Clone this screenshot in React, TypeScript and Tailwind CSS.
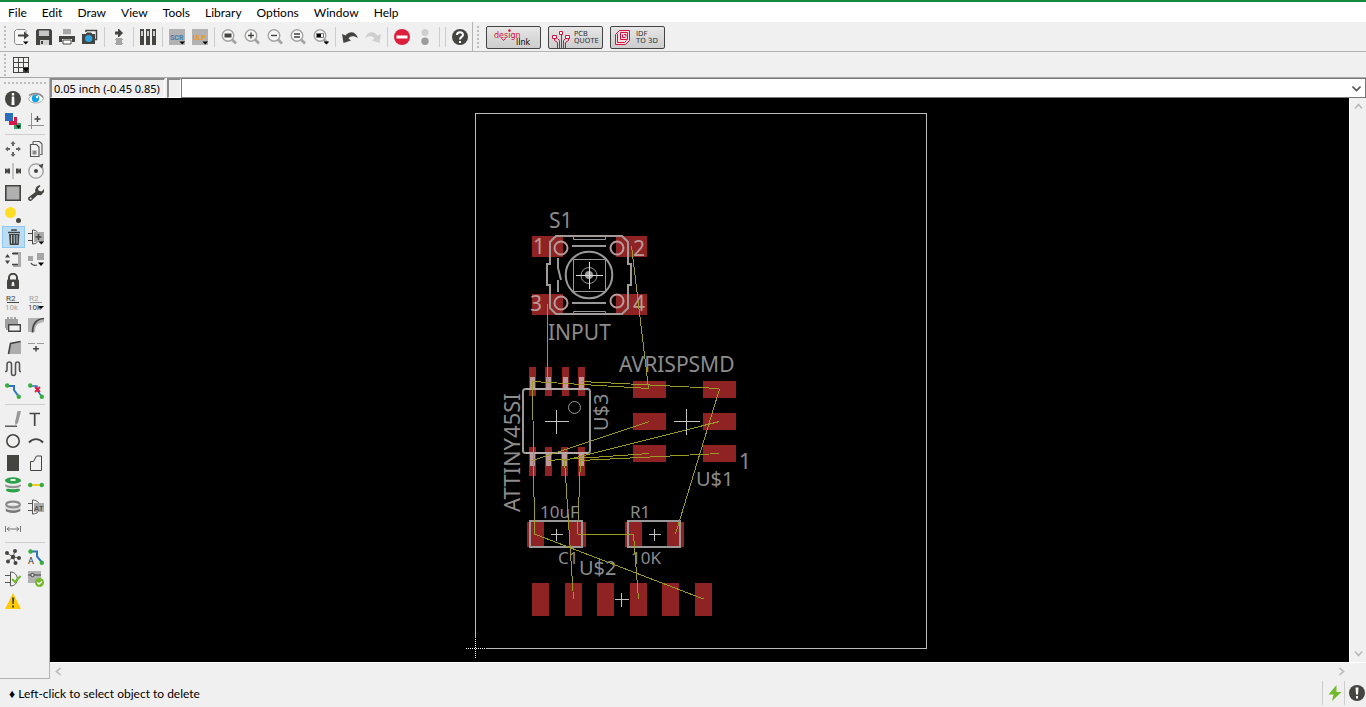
import { ReactNode, useState } from "react";

type Tool = {
  name: string;
  icon?: ReactNode;
};

const DARK = "#444441";

const menus = [
  "File",
  "Edit",
  "Draw",
  "View",
  "Tools",
  "Library",
  "Options",
  "Window",
  "Help",
];

const Icon = ({ children }: { children: ReactNode }) => (
  <svg width="16" height="16" viewBox="0 0 16 16" fill="none" aria-hidden="true">
    {children}
  </svg>
);

const Arrow = () => <path d="M10.5 12.5h5.5l-2.7 3z" fill="#000" />;

const Magnifier = ({ children }: { children: ReactNode }) => (
  <Icon>
    <circle cx="7" cy="6.5" r="5.8" fill="#f7f7f7" stroke="#a3a3a3" strokeWidth="1.4" />
    <path d="M11 10.5l4 4" stroke="#a3a3a3" strokeWidth="2.6" />
    {children}
  </Icon>
);

const fileTools: Tool[] = [
  {
    name: "Open",
    icon: (
      <Icon>
        <path d="M13 4V1.500L12 .5H3.500L1.500 2.500V13.500L3 15.500H10" stroke="#8b8b8b" fill="#f7f7f7" />
        <path d="M5 6.500h7" stroke={DARK} strokeWidth="2" />
        <path d="M11 2.500l5 4-5 4z" fill={DARK} />
        <path d="M10 12.500h5.500l-2.700 3z" fill="#000" />
      </Icon>
    ),
  },
  {
    name: "Save",
    icon: (
      <Icon>
        <path d="M1.500 0h13L16 1.500V16H0V1.500z" fill={DARK} />
        <path d="M3 1.500h10V7H3z" fill="#c7c7c7" />
        <path d="M4 11h9v5H4z" fill="#d5d5d5" />
        <path d="M5 12h2v3H5z" fill={DARK} />
      </Icon>
    ),
  },
  {
    name: "Print",
    icon: (
      <Icon>
        <path d="M4 0h8v6H4z" fill="#a6a6a6" />
        <path d="M0 7h16v6h-3v-3H3v3H0z" fill={DARK} />
        <path d="M4 11h8v4H4z" fill="#fff" stroke={DARK} />
        <path d="M4 5.500h8" stroke="#ddd" />
      </Icon>
    ),
  },
  {
    name: "CAM processor",
    icon: (
      <Icon>
        <path d="M4 3V1.500h10.500v9H13" stroke={DARK} strokeWidth="1.500" />
        <path d="M0 5h3.500l1.500-1.500h4L10.500 5H13v10H0z" fill={DARK} />
        <circle cx="6.700" cy="9.500" r="3.600" fill="#2da3e0" />
      </Icon>
    ),
  },
];

const schematicTools: Tool[] = [
  {
    name: "Schematic",
    icon: (
      <Icon>
        <path d="M4 2.500h3V0h1l4 4-4 4H7V5.500H4z" fill={DARK} />
        <path d="M5 9h6v7H5z" fill="#a6a6a6" />
        <path d="M4 10.500h8M4 14.500h8" stroke="#a6a6a6" />
      </Icon>
    ),
  },
];

const libraryTools: Tool[] = [
  {
    name: "Library manager",
    icon: (
      <Icon>
        <path
          d="M0 0h4v16H0zM6 0h4v16H6zM12 0h4v16h-4z"
          fill={DARK}
        />
        <path d="M1.200 2h1.600v5H1.200zM7.200 2h1.600v5H7.200zM13.200 2h1.600v5h-1.600z" fill="#eee" />
      </Icon>
    ),
  },
];

const scriptTools: Tool[] = [
  {
    name: "Script",
    icon: (
      <Icon>
        <path d="M0 0h16v16H0z" fill="#b2b2b2" />
        <text x="1" y="11" fontSize="7" fontWeight="700" fill="#3d7cb5" fontFamily="Roboto, sans-serif">SCR</text>
        <Arrow />
      </Icon>
    ),
  },
  {
    name: "User language program",
    icon: (
      <Icon>
        <path d="M0 0h16v16H0z" fill="#b2b2b2" />
        <text x="1" y="11" fontSize="7" fontWeight="700" fill="#e39a2d" fontFamily="Roboto, sans-serif">ULP</text>
        <Arrow />
      </Icon>
    ),
  },
];

const zoomTools: Tool[] = [
  {
    name: "Zoom to fit",
    icon: (
      <Magnifier>
        <path d="M3.500 4.500h7v4h-7z" fill={DARK} />
      </Magnifier>
    ),
  },
  {
    name: "Zoom in",
    icon: (
      <Magnifier>
        <path d="M7 3.500v6M4 6.500h6" stroke={DARK} strokeWidth="1.400" />
      </Magnifier>
    ),
  },
  {
    name: "Zoom out",
    icon: (
      <Magnifier>
        <path d="M4 6.500h6" stroke={DARK} strokeWidth="1.400" />
      </Magnifier>
    ),
  },
  {
    name: "Redraw",
    icon: (
      <Magnifier>
        <path d="M4 5h6M4 8h6" stroke={DARK} strokeWidth="1.300" />
      </Magnifier>
    ),
  },
  {
    name: "Zoom select",
    icon: (
      <Magnifier>
        <path d="M3.500 4.500h7v4h-7z" stroke="#777" />
        <path d="M4 5h4v3H4z" fill="#000" />
        <Arrow />
      </Magnifier>
    ),
  },
];

const historyTools: Tool[] = [
  {
    name: "Undo",
    icon: (
      <Icon>
        <path d="M0 5l1.500 9L9 11.500 6.500 9.500c2-3 5.500-3 9.500-.5C13.500 2.500 8 1.500 3.500 6.500z" fill={DARK} />
      </Icon>
    ),
  },
  {
    name: "Redo",
    icon: (
      <Icon>
        <path d="M16 5l-1.500 9L7 11.500l2.500-2C7.500 6.500 4 6.500 0 9 2.500 2.500 8 1.500 12.500 6.500z" fill="#cfcfcf" />
      </Icon>
    ),
  },
];

const stopTools: Tool[] = [
  {
    name: "Stop command",
    icon: (
      <Icon>
        <circle cx="8" cy="8" r="8" fill="#dc1f3c" />
        <path d="M2.500 6.500h11v3h-11z" fill="#fff" />
      </Icon>
    ),
  },
  {
    name: "Execute command",
    icon: (
      <Icon>
        <circle cx="8" cy="3.500" r="3.500" fill="#cfcfcf" />
        <circle cx="8" cy="12.300" r="3.700" fill="#9b9b9b" />
      </Icon>
    ),
  },
];

const helpTools: Tool[] = [
  {
    name: "Help topics",
    icon: (
      <Icon>
        <circle cx="8" cy="8" r="8" fill={DARK} />
        <path d="M5 6c0-3.600 6-3.600 6-.3C11 8 8 7.800 8 10.500" stroke="#fff" strokeWidth="2" />
        <path d="M7 12h2v2H7z" fill="#fff" />
      </Icon>
    ),
  },
];

const gridIcon = (
  <Icon>
    <path d="M0 0h16v16H0z" fill={DARK} />
    <path
      d="M1 1h4v4H1zM6 1h4v4H6zM11 1h4v4h-4zM1 6h4v4H1zM6 6h4v4H6zM11 6h4v4h-4zM1 11h4v4H1zM6 11h4v4H6z"
      fill="#f0f0f0"
    />
    <path d="M10 11h6l-3 4z" fill="#000" />
  </Icon>
);

const commandGroups: Tool[][] = [
  [
    {
      name: "Info",
      icon: (
        <Icon>
          <circle cx="8" cy="8" r="8" fill={DARK} />
          <path d="M6.800 2h2.400v2.500H6.800zM6.800 5.500h2.400L9.500 14h-3z" fill="#fff" />
        </Icon>
      ),
    },
    {
      name: "Show",
      icon: (
        <Icon>
          <path d="M.5 8C3 2.500 12 1.500 15.500 7c-1 6-12.500 7-15 1z" fill="#fff" stroke="#aaa" />
          <path d="M1 4.500C5 1.500 12 1.500 15 6.500" stroke="#888" strokeWidth="1.400" />
          <circle cx="7.500" cy="7.500" r="3.700" fill="#12a0e6" />
          <circle cx="9" cy="6" r="1.200" fill="#fff" />
        </Icon>
      ),
    },
    {
      name: "Display",
      icon: (
        <Icon>
          <path d="M9 10h7v6H9z" fill="#35a866" />
          <path d="M9 4h3v8H4V8h5z" fill="#d8184b" />
          <path d="M0 0h8v8H0z" fill="#2a6fbb" />
          <path d="M11 12.500h5l-2.500 3z" fill="#000" />
        </Icon>
      ),
    },
    {
      name: "Mark",
      icon: (
        <Icon>
          <path d="M3.500 0v16M0 12.500h16" stroke="#8f8f8f" />
          <path d="M9.500 3v6M6.500 6h6" stroke={DARK} strokeWidth="1.400" />
        </Icon>
      ),
    },
  ],
  [
    {
      name: "Move",
      icon: (
        <Icon>
          <path
            d="M8 0l2.500 3H9v2H7V3H5.500zM8 16l2.500-3H9v-2H7v2H5.500zM0 8l3-2.500V7h2v2H3v1.500zM16 8l-3-2.500V7h-2v2h2v1.500z"
            fill="#666663"
          />
        </Icon>
      ),
    },
    {
      name: "Copy",
      icon: (
        <Icon>
          <path d="M5 3V1l.5-.5h6l2.500 2.500V13.500H12" stroke="#666" strokeWidth="1.200" />
          <path d="M2.500 3.500h6l2.500 2.500v9.500H2.500z" fill="#f4f4f4" stroke="#555" strokeWidth="1.200" />
          <path d="M4.500 9.500h4v4h-4z" fill="#888" />
        </Icon>
      ),
    },
    {
      name: "Mirror",
      icon: (
        <Icon>
          <path d="M8 0v16" stroke="#999" />
          <path d="M0 5.500h1.500v1h1v-1H5v5H2.500v-1h-1v1H0zM16 5.500h-1.500v1h-1v-1H11v5h2.500v-1h1v1H16z" fill={DARK} />
        </Icon>
      ),
    },
    {
      name: "Rotate",
      icon: (
        <Icon>
          <circle cx="8" cy="8" r="7.200" stroke="#999" strokeWidth="1.300" />
          <circle cx="8" cy="8" r="2" fill={DARK} />
          <path d="M10.500 2.500L15.500.5 14 5.500z" fill={DARK} />
        </Icon>
      ),
    },
    {
      name: "Group",
      icon: (
        <Icon>
          <path d="M.8.800h14.400v14.400H.8z" fill="#b0b0b0" stroke={DARK} strokeWidth="1.600" />
        </Icon>
      ),
    },
    {
      name: "Change",
      icon: (
        <Icon>
          <path
            d="M11.500 0L8.500 1.800 7 5l.5 2L.3 12.500c-1 2 1 4.200 3 3.300L9.500 10l3.500.2L16 7V4l-2.500 2.500-3-1L10 3.500 12.500 1z"
            fill={DARK}
          />
          <circle cx="2.700" cy="13.500" r="1" fill="#eee" />
        </Icon>
      ),
    },
    {
      name: "Cut",
      icon: (
        <Icon>
          <circle cx="5.500" cy="5.500" r="5.500" fill="#ffdf26" />
          <circle cx="13.500" cy="13.500" r="2.500" fill={DARK} />
        </Icon>
      ),
    },
    { name: "" },
    {
      name: "Delete",
      icon: (
        <Icon>
          <path d="M7 2V1h4v1M3 3.500h12" stroke={DARK} strokeWidth="1.500" />
          <path d="M4 5h10.500l-.8 11H4.800z" fill={DARK} />
          <path d="M6.500 6v8.500M9.250 6v8.500M12 6v8.500" stroke="#b0c9dc" />
        </Icon>
      ),
    },
    {
      name: "Add",
      icon: (
        <Icon>
          <path d="M0 4.500h4M0 11.500h4M4.500 1v14c9 0 9-14 0-14z" stroke={DARK} />
          <path d="M6 3h10v10H6z" fill="#aaa" />
          <path d="M10.500 5v6M7.500 8h6" stroke={DARK} strokeWidth="1.500" />
          <Arrow />
        </Icon>
      ),
    },
    {
      name: "Pin swap",
      icon: (
        <Icon>
          <path d="M8 1h8v15H8v-3h5V4H8z" fill="#aaa" />
          <path d="M7 2.500h6M7 13.500h6" stroke={DARK} strokeWidth="1.300" />
          <path d="M0 6.500h5L2.500 3zM0 9.500h5L2.500 13z" fill={DARK} />
        </Icon>
      ),
    },
    {
      name: "Replace",
      icon: (
        <Icon>
          <path d="M0 5h5v5H0zM9 2h7v7H9z" fill="#a5a5a5" />
          <path d="M3 12c1 2 3 3 6 2" stroke={DARK} strokeWidth="1.300" />
          <path d="M10 11.500h6l-3 3.500z" fill="#000" />
        </Icon>
      ),
    },
    {
      name: "Lock",
      icon: (
        <Icon>
          <path d="M4 7V4.500a4 3.700 0 018 0V7" stroke={DARK} strokeWidth="2" />
          <rect x="2" y="6.500" width="12" height="9.500" rx="1" fill={DARK} />
          <path d="M7 9h2l.5 4h-3z" fill="#eee" />
        </Icon>
      ),
    },
    { name: "" },
    {
      name: "Name",
      icon: (
        <Icon>
          <text x="1" y="6" fontSize="8" fill={DARK} fontFamily="Roboto, sans-serif">R2</text>
          <path d="M2 7.500h12" stroke={DARK} />
          <text x="0" y="15" fontSize="8" fill="#a0a0a0" fontFamily="Roboto, sans-serif">10k</text>
        </Icon>
      ),
    },
    {
      name: "Value",
      icon: (
        <Icon>
          <text x="1" y="6" fontSize="8" fill="#a0a0a0" fontFamily="Roboto, sans-serif">R2</text>
          <path d="M2 7.500h12" stroke="#999" />
          <text x="0" y="15" fontSize="8" fill={DARK} fontFamily="Roboto, sans-serif">10k</text>
          <path d="M10 11h6l-3 3z" fill="#000" />
        </Icon>
      ),
    },
    {
      name: "Smash",
      icon: (
        <Icon>
          <path d="M0 2h13v9H0zM2 0h2v2H2zM5.500 0h2v2h-2zM9 0h2v2H9zM1 11h2v2H1z" fill="#a0a0a0" />
          <path d="M3.700 7.700h11.600v6.600H3.700z" fill="#f0f0f0" stroke={DARK} strokeWidth="1.400" />
        </Icon>
      ),
    },
    {
      name: "Miter",
      icon: (
        <Icon>
          <path d="M0 1h16v4C9 6 7 9 7 15H0z" fill="#b3b3b3" />
          <path d="M4.500 15.500C4.500 6.500 8 2 16 1.500" stroke={DARK} strokeWidth="1.700" />
        </Icon>
      ),
    },
    {
      name: "Split",
      icon: (
        <Icon>
          <path d="M3.500 14L6 4l10-2v13H3.500z" fill="#adadad" />
          <path d="M3.500 15L5.500 4.500l10-2" stroke={DARK} strokeWidth="1.600" />
        </Icon>
      ),
    },
    {
      name: "Optimize",
      icon: (
        <Icon>
          <path d="M0 4.500h7M9 4.500h7" stroke="#999" />
          <path d="M8 7v5.500M5 9.700h6" stroke={DARK} strokeWidth="1.500" />
        </Icon>
      ),
    },
    {
      name: "Meander",
      icon: (
        <Icon>
          <path
            d="M0 10.500h.5a1.500 1.500 0 001.500-1.500V3.250a2.250 2.250 0 014.500 0v9a2 2.250 0 004 0v-9a2 2.250 0 014 0v6a1.500 1.500 0 001.500 1.500"
            stroke="#555"
            strokeWidth="1.600"
          />
        </Icon>
      ),
    },
    { name: "" },
    {
      name: "Route",
      icon: (
        <Icon>
          <path d="M2 3h7v4l5 7" stroke="#2d74c4" strokeWidth="2" />
          <circle cx="2.200" cy="2.500" r="2.200" fill="#39ac3f" />
          <circle cx="13.800" cy="13.800" r="2.200" fill="#39ac3f" />
        </Icon>
      ),
    },
    {
      name: "Ripup",
      icon: (
        <Icon>
          <path d="M2 3h7v4l5 7" stroke="#2d74c4" strokeWidth="1.500" />
          <path d="M7 4l5 5M12 4L7 9" stroke="#e01d3f" strokeWidth="1.800" />
          <circle cx="2.200" cy="2.500" r="2.200" fill="#39ac3f" />
          <circle cx="13.800" cy="13.800" r="2.200" fill="#39ac3f" />
        </Icon>
      ),
    },
  ],
  [
    {
      name: "Line",
      icon: (
        <Icon>
          <path d="M12.500 0H16l-3 12-2.500 2-.5-3z" fill="#999" />
          <path d="M0 15.200h12" stroke={DARK} strokeWidth="1.300" />
        </Icon>
      ),
    },
    {
      name: "Text",
      icon: (
        <Icon>
          <path d="M1.500 2.500h10.500M6.700 2.500V15" stroke={DARK} strokeWidth="1.700" />
        </Icon>
      ),
    },
    {
      name: "Circle",
      icon: (
        <Icon>
          <circle cx="8" cy="8" r="6.200" stroke={DARK} strokeWidth="1.600" />
        </Icon>
      ),
    },
    {
      name: "Arc",
      icon: (
        <Icon>
          <path d="M1 9.500c4-4.500 10-4.500 14 0" stroke={DARK} strokeWidth="1.900" />
        </Icon>
      ),
    },
    {
      name: "Rectangle",
      icon: (
        <Icon>
          <path d="M2 0h12v16H2z" fill={DARK} />
        </Icon>
      ),
    },
    {
      name: "Polygon",
      icon: (
        <Icon>
          <path d="M2.500 15.500v-9h3l3-5.500h5v14.500z" stroke={DARK} />
        </Icon>
      ),
    },
    {
      name: "Via",
      icon: (
        <Icon>
          <ellipse cx="8" cy="13" rx="7" ry="2.500" fill="#2aa146" />
          <ellipse cx="8" cy="9.500" rx="8" ry="2.800" fill="#eee" />
          <ellipse cx="8" cy="8.500" rx="8" ry="2.700" fill="#929292" />
          <ellipse cx="8" cy="6.500" rx="8" ry="2.500" fill="#eee" />
          <ellipse cx="8" cy="3.500" rx="8" ry="3.200" fill="#2aa146" />
          <ellipse cx="8" cy="3" rx="3" ry="1" fill="#fff" />
        </Icon>
      ),
    },
    {
      name: "Signal",
      icon: (
        <Icon>
          <path d="M2 8h12" stroke="#f7ca1b" strokeWidth="2" />
          <circle cx="2.200" cy="8" r="2.200" fill="#39ac3f" />
          <circle cx="13.800" cy="8" r="2.200" fill="#39ac3f" />
        </Icon>
      ),
    },
    {
      name: "Hole",
      icon: (
        <Icon>
          <ellipse cx="8" cy="11" rx="7.500" ry="3" fill="#777" />
          <ellipse cx="8" cy="8.500" rx="8" ry="3" fill="#ddd" />
          <ellipse cx="8" cy="5.500" rx="6.800" ry="2.800" stroke="#8b8b8b" strokeWidth="2.200" />
        </Icon>
      ),
    },
    {
      name: "Attribute",
      icon: (
        <Icon>
          <path d="M0 4.500h4M0 11.500h4M4.500 1v14c10 0 10-14 0-14z" stroke="#555" />
          <path d="M6 4h10v9H6z" fill="#aaa" />
          <text x="6" y="12" fontSize="8" fill="#333" fontFamily="Roboto, sans-serif">AT</text>
        </Icon>
      ),
    },
    {
      name: "Dimension",
      icon: (
        <Icon>
          <path d="M.5 5v6M15.500 5v6M2 8h12M4.500 6L2 8l2.500 2M11.500 6L14 8l-2.500 2" stroke="#777" />
        </Icon>
      ),
    },
    { name: "" },
  ],
  [
    {
      name: "Ratsnest",
      icon: (
        <Icon>
          <path d="M8 8L2 4M8 8l2-6M8 8l6.500 1M8 8l-5 4M8 8l2.500 6" stroke="#666" />
          <g fill={DARK}>
            <circle cx="8" cy="8" r="2.200" />
            <circle cx="2" cy="4" r="2" />
            <circle cx="10" cy="2" r="2" />
            <circle cx="14" cy="9" r="2" />
            <circle cx="3" cy="12.500" r="2" />
            <circle cx="10.500" cy="14" r="2" />
          </g>
        </Icon>
      ),
    },
    {
      name: "Autorouter",
      icon: (
        <Icon>
          <path d="M2 2.500h7v5l5 6" stroke="#2d74c4" strokeWidth="2" />
          <circle cx="2.500" cy="2.500" r="2.200" fill="#39ac3f" />
          <circle cx="13.800" cy="13.800" r="2.200" fill="#39ac3f" />
          <text x="0" y="15" fontSize="9" fill="#333" fontFamily="Roboto, sans-serif">A</text>
        </Icon>
      ),
    },
    {
      name: "Electrical rule check",
      icon: (
        <Icon>
          <path d="M0 4.500h5M0 11.500h5M5.500 1v14c9 0 9-14 0-14z" stroke="#555" />
          <path d="M7 8l3 3 5.500-6" stroke="#72b92b" strokeWidth="2" />
        </Icon>
      ),
    },
    {
      name: "Design rule check",
      icon: (
        <Icon>
          <path d="M0 0h13v12H0z" fill="#b0b0b0" />
          <path d="M0 4h13" stroke={DARK} />
          <circle cx="4.500" cy="4" r="1.700" fill="#ddd" stroke={DARK} />
          <circle cx="11.500" cy="11.500" r="4.500" fill="#72b92b" />
          <path d="M9.300 11.500l1.700 1.700 3-3" stroke="#fff" strokeWidth="1.300" />
        </Icon>
      ),
    },
    {
      name: "Errors",
      icon: (
        <Icon>
          <path d="M8 0l8 16H0z" fill="#ffcb05" />
          <path d="M7 4.500h2.200l-.4 6.500H7.400zM7 12.500h2v2H7z" fill={DARK} />
        </Icon>
      ),
    },
  ],
];

const ToolGroup = ({ tools }: { tools: Tool[] }) => (
  <div className="flex">
    {tools.map((tool) => (
      <button key={tool.name} aria-label={tool.name} className="h-4 w-[23px] pl-[3px]">
        {tool.icon}
      </button>
    ))}
  </div>
);

const Separator = () => (
  <div className="w-[6px] pl-[2px]">
    <div className="-mt-[2px] h-5 w-px bg-[#cdcdcd]" />
  </div>
);

const Handle = () => (
  <div className="-mt-[3px] ml-1 h-[22px] w-[2px] bg-[repeating-linear-gradient(to_bottom,#bdbdbd_0_2px,#f0f0f0_2px_4px)]" />
);

const CrossHair = ({ x, y, r }: { x: number; y: number; r: number }) => (
  <path d={`M${x - r} ${y}h${2 * r}M${x} ${y - r}v${2 * r}`} stroke="#c4c4c4" />
);

const pads = [
  // switch
  [532, 236, 31, 21],
  [616, 236, 31, 21],
  [532, 294, 31, 21],
  [616, 294, 31, 21],
  // attiny
  [529, 367, 7, 29],
  [545, 367, 7, 29],
  [562, 367, 7, 29],
  [578, 367, 7, 29],
  [529, 447, 7, 29],
  [545, 447, 7, 29],
  [561, 447, 7, 29],
  [578, 447, 7, 29],
  // isp header
  [633, 381, 33, 17],
  [703, 381, 33, 17],
  [633, 413, 33, 17],
  [703, 413, 33, 17],
  [633, 445, 33, 17],
  [703, 445, 33, 17],
  // capacitor and resistor
  [527, 522, 17, 25],
  [569, 522, 17, 25],
  [625, 522, 17, 25],
  [667, 522, 17, 25],
  // ftdi header
  [532, 583, 17, 33],
  [565, 583, 17, 33],
  [597, 583, 17, 33],
  [630, 583, 17, 33],
  [662, 583, 17, 33],
  [695, 583, 17, 33],
];

const pins = [
  [530, 377, 11],
  [546, 377, 11],
  [563, 377, 11],
  [579, 377, 11],
  [530, 454, 12],
  [546, 454, 12],
  [562, 454, 12],
  [579, 454, 12],
];

const airwires = [
  [631.5, 246, 648.5, 388],
  [547.5, 304, 547.5, 382],
  [532.5, 381.5, 649, 388.5],
  [581, 381.5, 719, 388.5],
  [532.5, 381, 534.5, 534],
  [532.5, 460.5, 649.5, 421.5],
  [548, 460.5, 649.5, 453.5],
  [564.5, 460.5, 719.5, 421.5],
  [580.5, 460.5, 719.5, 453.5],
  [719.5, 389, 675.5, 534],
  [564.5, 460, 573.5, 599],
  [580.5, 460, 577.5, 534],
  [577.5, 534.5, 633.5, 534.5],
  [633.5, 534, 638.5, 599],
  [534.5, 534, 703.5, 599],
];

const Board = () => (
  <svg
    viewBox="50 98 1299 564"
    className="absolute inset-0 h-full w-full"
    role="img"
    aria-label="Board layout"
    fill="none"
  >
    <g shapeRendering="crispEdges">
      <path d="M475.500 638V113.500H926.500V648.500H486" stroke="#bcbcbc" />
      <path d="M475.500 639v20M466 648.500h20" stroke="#fff" strokeDasharray="1 1" />
      {pads.map(([x, y, w, h]) => (
        <rect key={`${x}-${y}`} x={x} y={y} width={w} height={h} fill="#8f2323" />
      ))}
      {pins.map(([x, y, h]) => (
        <rect key={`${x}-${y}`} x={x} y={y} width="5" height={h} fill="#bd9999" />
      ))}
    </g>

    <g stroke="#999" strokeWidth="2">
      <path d="M556 236h66l6 6v22h3v21h-3v23l-6 6h-66l-6-6v-23h-3v-21h3v-22z" stroke="#a39a9a" />
      <circle cx="561" cy="248" r="6.500" stroke="#bb9999" />
      <circle cx="617" cy="248" r="6.500" stroke="#bb9999" />
      <circle cx="561" cy="303" r="6.500" stroke="#bb9999" />
      <circle cx="617" cy="301" r="6.500" stroke="#bb9999" />
      <circle cx="589" cy="275" r="23.300" />
      <path d="M572 246h34M572 303h34M558 258v10l3 12M558 280v12" />
    </g>
    <g stroke="#999">
      <path d="M573.500 236v3.500h32V236M573.500 314v-2.500h32v2.500M573.500 259.500h32v32h-32z" />
      <circle cx="589" cy="275.500" r="8" />
      <circle cx="574.500" cy="407.500" r="6" />
    </g>
    <circle cx="589" cy="275" r="4" fill="#a0a0a0" />
    <path d="M576 275.500h27M589.500 262v27" stroke="#d8d8d8" />

    <g stroke="#999" strokeWidth="2">
      <rect x="523" y="389" width="67" height="64" rx="2.500" />
      <rect x="530" y="521" width="52" height="26" />
      <rect x="628" y="521" width="52" height="26" />
    </g>
    <path d="M526 389h62M526 453h62" stroke="#b5aaaa" strokeWidth="2" />

    <g fill="#8c8c8c" fontFamily="'Noto Sans', sans-serif" fontSize="21">
      <text x="549" y="228">S1</text>
      <text x="548" y="340">INPUT</text>
      <text x="619" y="372">AVRISPSMD</text>
      <text x="739" y="469">1</text>
      <text x="696" y="486" fontSize="20">U$1</text>
      <text x="579" y="575" fontSize="20">U$2</text>
      <text transform="translate(608 431) rotate(-90)" fontSize="20">U$3</text>
      <text transform="translate(520 512) rotate(-90)" fontSize="22">ATTINY45SI</text>
      <g fill="#bb9999">
        <text x="533" y="254">1</text>
        <text x="633" y="256">2</text>
        <text x="530" y="311">3</text>
        <text x="633" y="311">4</text>
      </g>
      <g fontSize="17">
        <text x="540" y="518">10uF</text>
        <text x="630" y="518">R1</text>
        <text x="558" y="564">C1</text>
        <text x="631" y="564">10K</text>
      </g>
    </g>

    <g shapeRendering="crispEdges">
      {airwires.map(([x1, y1, x2, y2]) => (
        <line key={`${x1}-${y1}-${x2}`} x1={x1} y1={y1} x2={x2} y2={y2} stroke="#9a9a24" />
      ))}
      <CrossHair x={556.5} y={421.5} r={12} />
      <CrossHair x={686.5} y={421.5} r={13} />
      <CrossHair x={556.5} y={534.5} r={6} />
      <CrossHair x={654.5} y={534.5} r={6} />
      <CrossHair x={621.5} y={599.5} r={7} />
    </g>
  </svg>
);

const Chevron = ({ d, color = "#b9b9b9" }: { d: string; color?: string }) => (
  <svg width="9" height="9" viewBox="0 0 9 9" fill="none" aria-hidden="true">
    <path d={d} stroke={color} strokeWidth="1.600" />
  </svg>
);

const linkButton =
  "flex h-[23px] w-[55px] items-center overflow-hidden rounded-[2px] border border-[#444] bg-linear-to-b from-[#e6e6e6] to-[#cdcdcd]";

const App = () => {
  const [command, setCommand] = useState("");
  const [selected, setSelected] = useState("Delete");

  return (
    <div className="flex h-screen flex-col overflow-hidden bg-[#f0f0f0] font-[Lato,sans-serif] text-xs text-black">
      <nav className="flex h-[22px] shrink-0 items-center gap-[15px] border-t-2 border-[#138a40] bg-white px-2 pt-px">
        {menus.map((menu) => (
          <button key={menu} className="leading-5">
            {menu}
          </button>
        ))}
      </nav>

      <div className="flex h-[30px] shrink-0 items-start border-b border-[#b4b4b4] pt-[7px]">
        <Handle />
        <div className="flex pl-1">
          <ToolGroup tools={fileTools} />
          <Separator />
          <ToolGroup tools={schematicTools} />
          <Separator />
          <ToolGroup tools={libraryTools} />
          <Separator />
          <ToolGroup tools={scriptTools} />
          <Separator />
          <ToolGroup tools={zoomTools} />
          <Separator />
          <ToolGroup tools={historyTools} />
          <Separator />
          <ToolGroup tools={stopTools} />
          <Separator />
          <Separator />
          <ToolGroup tools={helpTools} />
        </div>
        <div className="-mt-[7px] h-[29px] w-px bg-[#b4b4b4]" />
        <Handle />
        <div className="-mt-[3px] flex gap-[7px] pl-[7px]">
          <button className={linkButton} aria-label="design link">
            <svg width="53" height="21" viewBox="0 0 53 21" aria-hidden="true" fontFamily="'DejaVu Sans', sans-serif">
              <text x="7" y="11" fontSize="8" fill="#d5103f">design</text>
              <text x="29" y="18" fontSize="8" fill="#000">link</text>
              <path d="M14.500 11.500l2 2 2-2M32.500 11v7" stroke="#d5103f" fill="none" />
              <circle cx="22.500" cy="3.500" r="1.200" fill="#d5103f" />
            </svg>
          </button>
          <button className={linkButton}>
            <svg width="22" height="21" viewBox="0 0 22 21" fill="none" aria-hidden="true">
              <path
                d="M5.500 11.500v2l3 2V21M8.500 11.500l2 2V21M12.500 8v13M16.500 11.500l-2 2V21M19.500 11.500v2l-3 2V21"
                stroke="#d5103f"
              />
              <path d="M3.500 8.500h4v3h-4zM10.500 4.500h3v3h-3zM16.500 8.500h4v3h-4z" fill="#fff" stroke="#d5103f" />
            </svg>
            <span className="ml-[3px] text-left font-['DejaVu_Sans',sans-serif] text-[7px] leading-[7px] text-[#333]">
              PCB
              <br />
              QUOTE
            </span>
          </button>
          <button className={linkButton}>
            <svg width="22" height="21" viewBox="0 0 22 21" fill="none" aria-hidden="true">
              <path d="M4.500 7.500l4-4h10v10l-4 4h-10z" fill="#f4dfe4" stroke="#d5103f" />
              <path d="M9.500 5.500h7v7h-7zM6.500 7v8.500h7l2-2" stroke="#d5103f" />
              <path d="M11.500 7.500v3h3M13 7.500h2v2" stroke="#d5103f" />
            </svg>
            <span className="ml-[3px] text-left font-['DejaVu_Sans',sans-serif] text-[7px] leading-[7px] text-[#333]">
              IDF
              <br />
              TO 3D
            </span>
          </button>
        </div>
      </div>

      <div className="flex h-[26px] shrink-0 items-start border-b border-[#a8a8a8] pt-[5px]">
        <Handle />
        <button aria-label="Grid" className="ml-1 h-4 w-[23px] pl-[3px]">
          {gridIcon}
        </button>
      </div>

      <div className="flex min-h-0 flex-1">
        <aside className="w-[50px] shrink-0 border-r border-b border-[#b4b4b4] pt-1 pl-[2px]">
          <div className="mb-1 ml-[2px] h-[2px] w-[43px] bg-[repeating-linear-gradient(to_right,#bdbdbd_0_2px,#f0f0f0_2px_4px)]" />
          {commandGroups.map((group, i) => (
            <div key={i}>
              {i > 0 && (
                <div className="ml-[3px] h-[6px] w-10 pt-[2px]">
                  <div className="h-px bg-[#cdcdcd]" />
                </div>
              )}
              <div className="grid grid-cols-[23px_23px] auto-rows-[22px]">
                {group.map((tool, j) =>
                  tool.icon ? (
                    <button
                      key={tool.name}
                      aria-label={tool.name}
                      onClick={() => setSelected(tool.name)}
                      className={
                        selected === tool.name
                          ? "border border-[#8fc8f5] bg-[#bcdcf4] pl-[2px]"
                          : "border-y border-transparent pl-[3px]"
                      }
                    >
                      {tool.icon}
                    </button>
                  ) : (
                    <span key={j} />
                  ),
                )}
              </div>
            </div>
          ))}
        </aside>

        <main className="flex min-w-0 flex-1 flex-col">
          <div className="flex h-5 shrink-0">
            <div className="mr-[2px] min-w-[115px] border-t-2 border-r border-b border-l-2 border-[#8a8a8a] border-r-white border-b-white px-[2px] font-['Noto_Sans',sans-serif] text-[11px] leading-[17px] whitespace-nowrap">
              0.05 inch (-0.45 0.85)
            </div>
            <div className="w-[14px] border-t-2 border-r border-b border-l-2 border-[#8a8a8a] border-r-white border-b-white" />
            <div className="flex flex-1 items-center border border-[#7a7a7a] bg-white">
              <input
                aria-label="Command line"
                value={command}
                onChange={(e) => setCommand(e.target.value)}
                className="h-full min-w-0 flex-1 px-1 outline-none"
              />
              <button aria-label="Command history" className="w-[13px]">
                <Chevron d="M.5 2.500l4 4 4-4" color="#555" />
              </button>
            </div>
          </div>
          <div className="flex min-h-0 flex-1">
            <div className="relative flex-1 bg-black">
              <Board />
            </div>
            <div className="flex w-[17px] flex-col items-center justify-between border-l border-white py-1">
              <button aria-label="Scroll up">
                <Chevron d="M1 6.500l3.500-4 3.500 4" />
              </button>
              <button aria-label="Scroll down">
                <Chevron d="M1 2.500l3.500 4 3.500-4" />
              </button>
            </div>
          </div>
          <div className="flex h-[17px] shrink-0 items-center justify-between border-t border-white pr-5 pl-1">
            <button aria-label="Scroll left">
              <Chevron d="M6.500 1l-4 3.500 4 3.500" />
            </button>
            <button aria-label="Scroll right">
              <Chevron d="M2.500 1l4 3.500-4 3.500" />
            </button>
          </div>
        </main>
      </div>

      <footer className="flex h-7 shrink-0 items-center pl-[9px]">
        <span className="pt-px">♦ Left-click to select object to delete</span>
        <div className="ml-auto flex items-center">
          <div className="flex h-6 w-[22px] items-center border-l border-[#cdcdcd] pl-1">
            <Icon>
              <path d="M9.500 0L1.500 9.500h5L5 16l9.500-9h-5z" fill="#72b92b" />
            </Icon>
          </div>
          <div className="flex h-6 w-[22px] items-center border-l border-[#cdcdcd] pl-1">
            <Icon>
              <circle cx="8" cy="8" r="8" fill={DARK} />
              <path d="M6.500 2.500h3L9 9.500H7zM7 11h2v2.500H7z" fill="#fff" />
            </Icon>
          </div>
        </div>
      </footer>
    </div>
  );
};

export default App;
